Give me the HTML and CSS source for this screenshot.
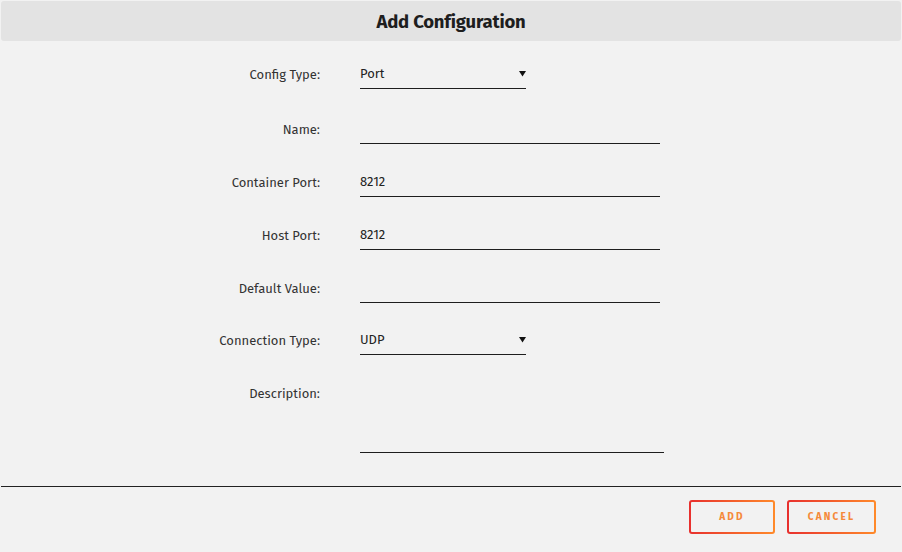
FILE: index.html
```html
<!DOCTYPE html>
<html>
<head>
<meta charset="utf-8">
<link rel="stylesheet" href="styles.css">
</head>
<body>
<div class="dialog">
  <div class="header">Add Configuration</div>
  <form class="form">
    <div class="row row-select">
      <label class="label">Config Type:</label>
      <div class="field select w166"><span>Port</span><svg class="caret" width="7" height="7" viewBox="0 0 7 7"><path d="M0 1H7L3.5 6.5Z" fill="#111"/></svg></div>
    </div>
    <div class="row">
      <label class="label">Name:</label>
      <div class="field w300"></div>
    </div>
    <div class="row">
      <label class="label">Container Port:</label>
      <div class="field w300">8212</div>
    </div>
    <div class="row">
      <label class="label">Host Port:</label>
      <div class="field w300">8212</div>
    </div>
    <div class="row">
      <label class="label">Default Value:</label>
      <div class="field w300"></div>
    </div>
    <div class="row row-select">
      <label class="label">Connection Type:</label>
      <div class="field select w166"><span>UDP</span><svg class="caret" width="7" height="7" viewBox="0 0 7 7"><path d="M0 1H7L3.5 6.5Z" fill="#111"/></svg></div>
    </div>
    <div class="row row-area">
      <label class="label label-top">Description:</label>
      <div class="field area w304"></div>
    </div>
  </form>
  <div class="footer">
    <button class="btn btn-add" type="button"><span>ADD</span></button>
    <button class="btn btn-cancel" type="button"><span>CANCEL</span></button>
  </div>
</div>
</body>
</html>
```

FILE: styles.css
```css
html, body {
  margin: 0;
  padding: 0;
  background: #f2f2f2;
}
body {
  font-family: "Fira Sans", "Open Sans", "Noto Sans", sans-serif;
  color: #222;
  width: 902px;
  height: 552px;
  overflow: hidden;
}
.dialog {
  display: flex;
  flex-direction: column;
}
.header {
  margin: 1px 1px 0 1px;
  height: 40px;
  box-sizing: border-box;
  padding-top: 2px;
  background: #e3e3e3;
  border-radius: 3px;
  display: flex;
  align-items: center;
  justify-content: center;
  font-weight: 700;
  font-size: 18.5px;
  letter-spacing: -0.2px;
  color: #1e1e1e;
}
.form {
  display: flex;
  flex-direction: column;
  padding-top: 19px;
  margin: 0;
}
.row {
  display: flex;
  align-items: center;
  height: 30px;
  margin-bottom: 23px;
}
.row-select {
  height: 29px;
  margin-bottom: 25px;
}
.row-select + .row-area { margin-top: 4px; }
.row-area {
  align-items: flex-start;
  height: 69px;
  margin-bottom: 0;
}
.label {
  width: 320px;
  text-align: right;
  font-size: 13px;
  color: #333;
  margin-right: 40px;
  flex: none;
}
.label-top {
  line-height: 20px;
}
.field {
  box-sizing: border-box;
  height: 100%;
  border-bottom: 1px solid #1e1e1e;
  font-size: 13px;
  color: #222;
  display: flex;
  align-items: center;
  padding-bottom: 1px;
}
.select {
  justify-content: space-between;
}
.caret {
  margin-top: 0;
}
.w166 { width: 166px; }
.w300 { width: 300px; }
.w304 { width: 304px; }
.area { height: 69px; }
.footer {
  margin-top: 33px;
  border-top: 1px solid #222;
  margin-left: 1px;
  margin-right: 1px;
  display: flex;
  justify-content: flex-end;
  gap: 12px;
  padding: 13px 25px 0 0;
}
.btn {
  box-sizing: border-box;
  height: 34px;
  border: 2px solid transparent;
  border-radius: 3px;
  background:
    linear-gradient(#f2f2f2, #f2f2f2) padding-box,
    linear-gradient(90deg, #e8302e, #ff8a2a) border-box;
  font-family: "Fira Sans", "Open Sans", "Noto Sans", sans-serif;
  font-weight: 700;
  font-size: 10px;
  letter-spacing: 2.2px;
  color: #f5893a;
  padding: 0;
  display: flex;
  align-items: center;
  justify-content: center;
}
.btn-add { width: 86px; }
.btn-cancel { width: 89px; }
```
